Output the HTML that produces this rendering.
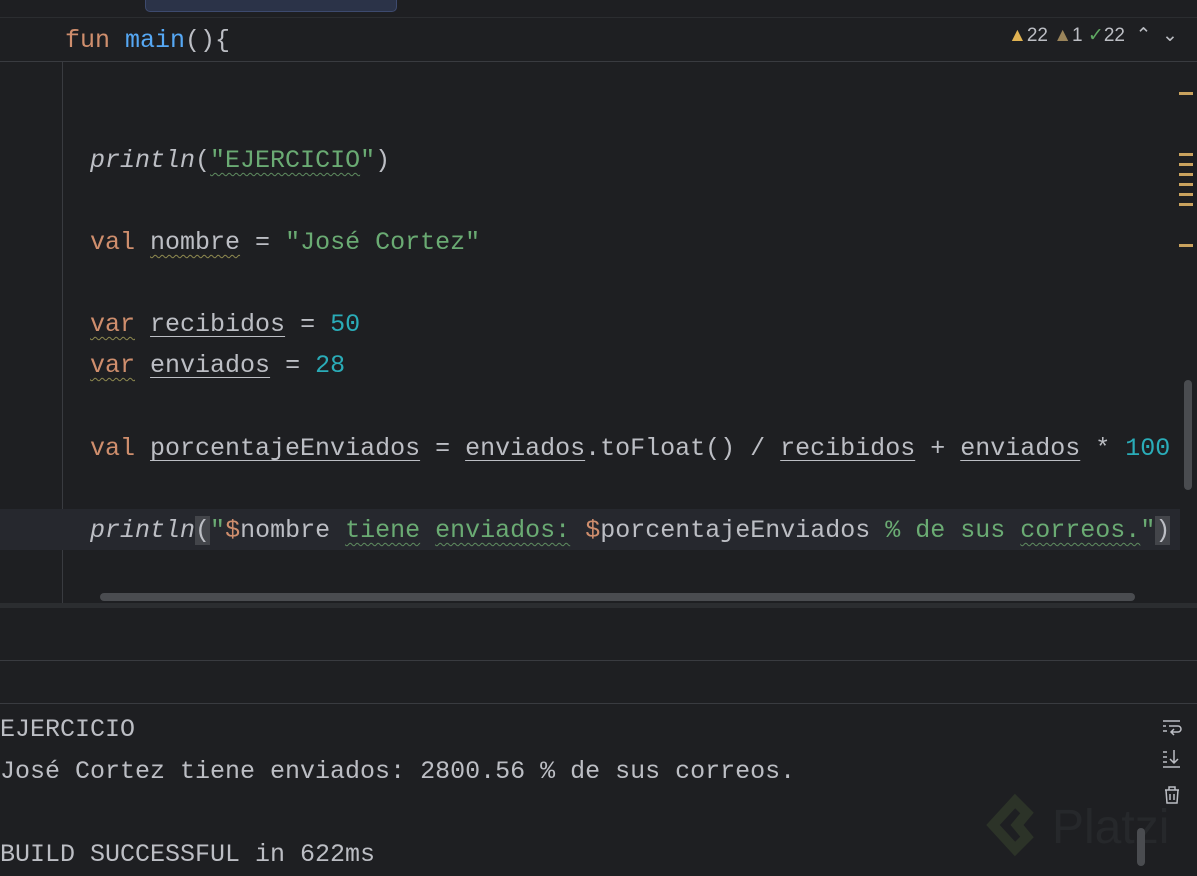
<!DOCTYPE html>
<html><head><meta charset="utf-8"><style>
body{margin:0;width:1197px;height:870px;background:#1e1f22;overflow:hidden;position:relative;font-family:"Liberation Mono","DejaVu Sans Mono",monospace;}
.l{position:absolute;white-space:pre;font-size:25px;line-height:41px;color:#bcbec4;height:41px;}
.k{color:#cf8e6d}.f{color:#56a8f5}.s{color:#6aab73}.n{color:#2aacb8}.i{font-style:italic}
.w{text-decoration:underline wavy #8f8a50;text-underline-offset:5px;text-decoration-thickness:1px}
.ws{text-decoration:underline wavy #5f8c60;text-underline-offset:5px;text-decoration-thickness:1px}
.u{text-decoration:underline;text-underline-offset:5px;text-decoration-thickness:1px}
.c{position:absolute;white-space:pre;font-size:25px;line-height:42px;color:#bcbec4;left:0}
.m{position:absolute;right:4px;width:14px;height:3px;background:#c9a25e}
</style></head><body>
<div style="position:absolute;left:0;top:0;width:1197px;height:17px;background:#1e1f22;border-bottom:1px solid #2b2d30"></div>
<div style="position:absolute;left:145px;top:-12px;width:250px;height:22px;background:#2b3348;border:1px solid #3d4a6e;border-radius:5px"></div>
<div style="position:absolute;left:0;top:61px;width:1197px;height:1px;background:#393b40"></div>
<div style="position:absolute;left:62px;top:62px;width:1px;height:541px;background:#393b40"></div>
<div style="position:absolute;left:0;top:509px;width:1180px;height:41px;background:#26282e"></div>
<div class="l" style="left:65px;top:20px"><span class="k">fun</span> <span class="f">main</span>(){</div>
<div style="position:absolute;left:1008px;top:24px;font-family:'Liberation Sans',sans-serif;font-size:19px;color:#bcbec4;white-space:pre"><span style="color:#e0b252">▲</span>22 <span style="color:#9a845a">▲</span>1 <span style="color:#5fa862">✓</span>22 &nbsp;⌃ &nbsp;⌄</div>
<div class="l i" style="left:90px;top:140px">println<span style="font-style:normal">(</span><span class="s ws" style="font-style:normal">"EJERCICIO</span><span class="s" style="font-style:normal">"</span><span style="font-style:normal">)</span></div>
<div class="l" style="left:90px;top:222px"><span class="k">val</span> <span class="w">nombre</span> = <span class="s">"José Cortez"</span></div>
<div class="l" style="left:90px;top:304px"><span class="k w">var</span> <span class="u">recibidos</span> = <span class="n">50</span></div>
<div class="l" style="left:90px;top:345px"><span class="k w">var</span> <span class="u">enviados</span> = <span class="n">28</span></div>
<div class="l" style="left:90px;top:428px"><span class="k">val</span> <span class="u">porcentajeEnviados</span> = <span class="u">enviados</span>.toFloat() / <span class="u">recibidos</span> + <span class="u">enviados</span> * <span class="n">100</span></div>
<div class="l" style="left:90px;top:510px"><span class="i">println</span><span style="background:#43454a">(</span><span class="s">"</span><span class="k">$</span>nombre <span class="s ws">tiene</span> <span class="s ws">enviados:</span> <span class="k">$</span>porcentajeEnviados <span class="s">% de sus </span><span class="s ws">correos.</span><span class="s">"</span><span style="background:#43454a">)</span></div>
<div class="m" style="top:92px"></div>
<div class="m" style="top:153px"></div><div class="m" style="top:163px"></div><div class="m" style="top:173px"></div><div class="m" style="top:183px"></div><div class="m" style="top:193px"></div><div class="m" style="top:203px"></div>
<div class="m" style="top:244px"></div>
<div style="position:absolute;left:1184px;top:380px;width:8px;height:110px;background:#4a4c50;border-radius:4px"></div>
<div style="position:absolute;left:100px;top:593px;width:1035px;height:8px;background:#4a4c50;border-radius:4px"></div>
<div style="position:absolute;left:0;top:603px;width:1197px;height:5px;background:#2b2d30"></div>
<div style="position:absolute;left:0;top:660px;width:1197px;height:1px;background:#393b40"></div>
<div style="position:absolute;left:0;top:703px;width:1197px;height:1px;background:#393b40"></div>
<div class="c" style="top:709px">EJERCICIO</div>
<div class="c" style="top:751px">José Cortez tiene enviados: 2800.56 % de sus correos.</div>
<div class="c" style="top:834px">BUILD SUCCESSFUL in 622ms</div>
<svg style="position:absolute;left:1160px;top:718px" width="24" height="90" viewBox="0 0 24 90" fill="none" stroke="#bcbec4" stroke-width="1.5">
<path d="M3 3h17M3 8h3M9 8h9a3 3 0 0 1 0 6h-6M14 11l-3 3 3 3M3 13h4"/>
<path d="M3 34h4M3 39h4M3 44h4M14 32v13M10 41l4 4 4-4M3 49h17"/>
<path d="M5 72h14M9 72v-3h6v3M6 72l1 13h10l1-13M10 76v6M14 76v6"/>
</svg>
<svg style="position:absolute;left:985px;top:793px" width="60" height="70" viewBox="0 0 60 70" fill="none" stroke="#2c3328" stroke-width="10"><path d="M30 8L8 32l22 24 12-12-10-12 10-12z"/></svg>
<div style="position:absolute;left:1052px;top:800px;font-family:'Liberation Sans',sans-serif;font-size:48px;color:#26282b">Platzi</div>
<div style="position:absolute;left:1137px;top:828px;width:8px;height:38px;background:#4a4c50;border-radius:4px"></div>
</body></html>
